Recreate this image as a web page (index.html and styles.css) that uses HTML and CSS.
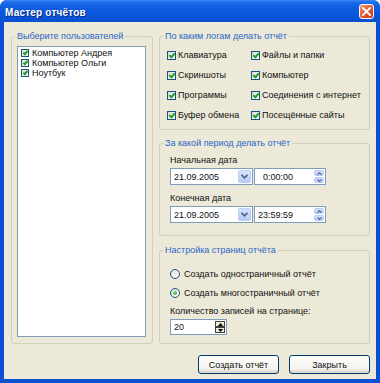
FILE: index.html
```html
<!DOCTYPE html>
<html lang="ru">
<head>
    <meta charset="UTF-8">
    <title>Мастер отчётов</title>
    <link rel="stylesheet" href="styles.css">
</head>
<body>
    <div class="window">
        <div class="titlebar">
            <span class="title">Мастер отчётов</span>
            <span class="close-btn">
                <svg width="9" height="9" viewBox="0 0 9 9"><path d="M1 1L8 8M8 1L1 8" stroke="#fff" stroke-width="1.8" stroke-linecap="square"/></svg>
            </span>
        </div>
        <div class="client">
            <div class="panels">
                <fieldset class="group users">
                    <legend>Выберите пользователей</legend>
                    <ul class="listbox">
                        <li><span class="check small"></span>Компьютер Андрея</li>
                        <li><span class="check small"></span>Компьютер Ольги</li>
                        <li><span class="check small"></span>Ноутбук</li>
                    </ul>
                </fieldset>
                <div class="right-col">
                    <fieldset class="group logs">
                        <legend>По каким логам делать отчёт</legend>
                        <div class="log-grid">
                            <div class="check-item"><span class="check"></span>Клавиатура</div>
                            <div class="check-item"><span class="check"></span>Файлы и папки</div>
                            <div class="check-item"><span class="check"></span>Скриншоты</div>
                            <div class="check-item"><span class="check"></span>Компьютер</div>
                            <div class="check-item"><span class="check"></span>Программы</div>
                            <div class="check-item"><span class="check"></span>Соединения с интернет</div>
                            <div class="check-item"><span class="check"></span>Буфер обмена</div>
                            <div class="check-item"><span class="check"></span>Посещённые сайты</div>
                        </div>
                    </fieldset>
                    <fieldset class="group period">
                        <legend>За какой период делать отчёт</legend>
                        <div class="inner">
                            <div class="field-label">Начальная дата</div>
                            <div class="date-row">
                                <div class="combo">
                                    <span class="value">21.09.2005</span>
                                    <span class="drop-btn"><svg width="7" height="5" viewBox="0 0 7 5"><path d="M0.5 0.8L3.5 3.8L6.5 0.8" stroke="#4D6185" stroke-width="1.6" fill="none"/></svg></span>
                                </div>
                                <div class="time">
                                    <span class="value short">0:00:00</span>
                                    <span class="updown">
                                        <span class="half"><svg width="5" height="3" viewBox="0 0 5 3"><path d="M0.5 2.6L2.5 0.6L4.5 2.6" stroke="#4D6185" stroke-width="1.1" fill="none"/></svg></span>
                                        <span class="half"><svg width="5" height="3" viewBox="0 0 5 3"><path d="M0.5 0.4L2.5 2.4L4.5 0.4" stroke="#4D6185" stroke-width="1.1" fill="none"/></svg></span>
                                    </span>
                                </div>
                            </div>
                            <div class="field-label second">Конечная дата</div>
                            <div class="date-row">
                                <div class="combo">
                                    <span class="value">21.09.2005</span>
                                    <span class="drop-btn"><svg width="7" height="5" viewBox="0 0 7 5"><path d="M0.5 0.8L3.5 3.8L6.5 0.8" stroke="#4D6185" stroke-width="1.6" fill="none"/></svg></span>
                                </div>
                                <div class="time">
                                    <span class="value">23:59:59</span>
                                    <span class="updown">
                                        <span class="half"><svg width="5" height="3" viewBox="0 0 5 3"><path d="M0.5 2.6L2.5 0.6L4.5 2.6" stroke="#4D6185" stroke-width="1.1" fill="none"/></svg></span>
                                        <span class="half"><svg width="5" height="3" viewBox="0 0 5 3"><path d="M0.5 0.4L2.5 2.4L4.5 0.4" stroke="#4D6185" stroke-width="1.1" fill="none"/></svg></span>
                                    </span>
                                </div>
                            </div>
                        </div>
                    </fieldset>
                    <fieldset class="group pages">
                        <legend>Настройка страниц отчёта</legend>
                        <div class="inner">
                            <div class="radio-item"><span class="radio"></span>Создать одностраничный отчёт</div>
                            <div class="radio-item"><span class="radio on"></span>Создать многостраничный отчёт</div>
                            <div class="field-label count">Количество записей на странице:</div>
                            <div class="numeric">
                                <span class="value">20</span>
                                <span class="num-btns">
                                    <span class="num-btn"><svg width="5" height="3" viewBox="0 0 5 3"><path d="M0 3L2.5 0L5 3Z" fill="#000"/></svg></span>
                                    <span class="num-btn"><svg width="5" height="3" viewBox="0 0 5 3"><path d="M0 0L2.5 3L5 0Z" fill="#000"/></svg></span>
                                </span>
                            </div>
                        </div>
                    </fieldset>
                </div>
            </div>
            <div class="buttons">
                <button class="button">Создать отчёт</button>
                <button class="button">Закрыть</button>
            </div>
        </div>
    </div>
</body>
</html>
```

FILE: styles.css
```css
* {
    box-sizing: border-box;
}
body {
    margin: 0;
    background-color: #ffffff;
    font-family: "Liberation Sans", Arial, sans-serif;
    font-size: 9px;
    color: #111111;
}
.window {
    width: 380px;
    height: 383px;
    display: flex;
    flex-direction: column;
    background-color: #0B4FD3;
    border-radius: 7px 7px 0 0;
    overflow: hidden;
}
.titlebar {
    height: 22px;
    flex: none;
    display: flex;
    align-items: center;
    justify-content: space-between;
    padding: 0 6px 0 5px;
    background: linear-gradient(#3D8BF5 0, #1F6EEB 2px, #0F5FE0 7px, #0A56DB 60%, #0A50D0 100%);
}
.title {
    padding-top: 2px;
    color: #ffffff;
    font-weight: bold;
    font-size: 10px;
    letter-spacing: 0.2px;
    text-shadow: 1px 1px #0A2A8A;
}
.close-btn {
    width: 15px;
    height: 15px;
    margin-top: 1px;
    border: 1px solid #ffffff;
    border-radius: 3px;
    background: linear-gradient(135deg, #F29A78, #E05A36 50%, #C7401F);
    display: flex;
    align-items: center;
    justify-content: center;
}
.client {
    flex: 1;
    margin: 0 4px 4px 4px;
    background-color: #ECE9D8;
    padding: 8px 6px 5px 7px;
    display: flex;
    flex-direction: column;
}
.panels {
    display: grid;
    grid-template-columns: 142px 1fr;
    gap: 6px;
}
.group {
    margin: 0;
    min-width: 0;
    border: 1px solid #D0D0BF;
    border-radius: 3px;
    padding: 0 5px;
}
.group legend {
    color: #2A66C8;
    line-height: 12px;
    padding: 0 2px;
    margin-left: -2px;
}
.users {
    padding: 4px 6px 6px 5px;
    display: flex;
    flex-direction: column;
}
.listbox {
    flex: 1;
    margin: 0;
    padding: 1px 3px;
    list-style: none;
    background-color: #ffffff;
    border: 1px solid #7F9DB9;
}
.listbox li {
    height: 10px;
    line-height: 10px;
    display: flex;
    align-items: center;
    gap: 3px;
}
.right-col {
    display: flex;
    flex-direction: column;
}
.logs {
    padding-top: 3px;
    padding-bottom: 4px;
}
.log-grid {
    margin-left: 2px;
    display: grid;
    grid-template-columns: 84px 1fr;
    grid-auto-rows: 20px;
}
.check-item {
    display: flex;
    align-items: center;
    gap: 2px;
    white-space: nowrap;
}
.check {
    position: relative;
    flex: none;
    width: 9px;
    height: 9px;
    border: 1px solid #1C5180;
    background: linear-gradient(135deg, #DCDCD7, #FFFFFF);
}
.check::after {
    content: "";
    position: absolute;
    left: 2px;
    top: 0;
    width: 2px;
    height: 4px;
    border: solid #21A121;
    border-width: 0 2px 2px 0;
    transform: rotate(40deg);
}
.check.small {
    width: 8px;
    height: 8px;
}
.check.small::after {
    left: 2px;
    top: 0;
    width: 1px;
    height: 3px;
}
.period {
    margin-top: 7px;
    padding-top: 5px;
    padding-bottom: 12px;
}
.inner {
    margin-left: 5px;
}
.field-label {
    line-height: 12px;
}
.field-label.second {
    margin-top: 7px;
}
.date-row {
    display: flex;
    gap: 1px;
    margin-top: 2px;
}
.combo,
.time,
.numeric {
    height: 17px;
    display: flex;
    align-items: center;
    background-color: #ffffff;
    border: 1px solid #7F9DB9;
    padding: 1px;
}
.combo {
    width: 83px;
}
.time {
    width: 72px;
}
.value {
    flex: 1;
    padding-left: 2px;
}
.value.short {
    padding-left: 7px;
}
.drop-btn {
    width: 13px;
    height: 100%;
    display: flex;
    align-items: center;
    justify-content: center;
    border: 1px solid #B9CDF5;
    border-radius: 2px;
    background: linear-gradient(#D6E3FD, #B7CAF6);
}
.updown {
    width: 10px;
    height: 100%;
    display: flex;
    flex-direction: column;
    gap: 1px;
}
.half {
    flex: 1;
    display: flex;
    align-items: center;
    justify-content: center;
    border: 1px solid #B9CDF5;
    border-radius: 2px;
    background: linear-gradient(#D6E3FD, #B7CAF6);
}
.pages {
    margin-top: 8px;
    padding-top: 8px;
    padding-bottom: 8px;
}
.radio-item {
    height: 19px;
    display: flex;
    align-items: center;
    gap: 4px;
}
.radio {
    flex: none;
    width: 10px;
    height: 10px;
    border: 1px solid #1C5180;
    border-radius: 50%;
    background: linear-gradient(135deg, #DCDCD7, #FFFFFF);
    display: flex;
    align-items: center;
    justify-content: center;
}
.radio.on::after {
    content: "";
    width: 4px;
    height: 4px;
    border-radius: 50%;
    background: radial-gradient(circle at 35% 35%, #7BE07B, #21A121);
}
.field-label.count {
    margin-top: 3px;
}
.numeric {
    width: 57px;
    height: 16px;
    margin-top: 2px;
}
.num-btns {
    width: 10px;
    height: 100%;
    display: flex;
    flex-direction: column;
}
.num-btn {
    flex: 1;
    display: flex;
    align-items: center;
    justify-content: center;
    border: 1px solid #404040;
    background-color: #ECE9D8;
}
.buttons {
    display: flex;
    justify-content: flex-end;
    gap: 10px;
    margin-top: 11px;
}
.button {
    width: 81px;
    height: 19px;
    padding: 0;
    border: 1px solid #003C74;
    border-radius: 3px;
    background: linear-gradient(#FFFFFF, #F3F2EC 75%, #D8D2C6);
    font-family: "Liberation Sans", Arial, sans-serif;
    font-size: 9px;
    color: #111111;
}
```
